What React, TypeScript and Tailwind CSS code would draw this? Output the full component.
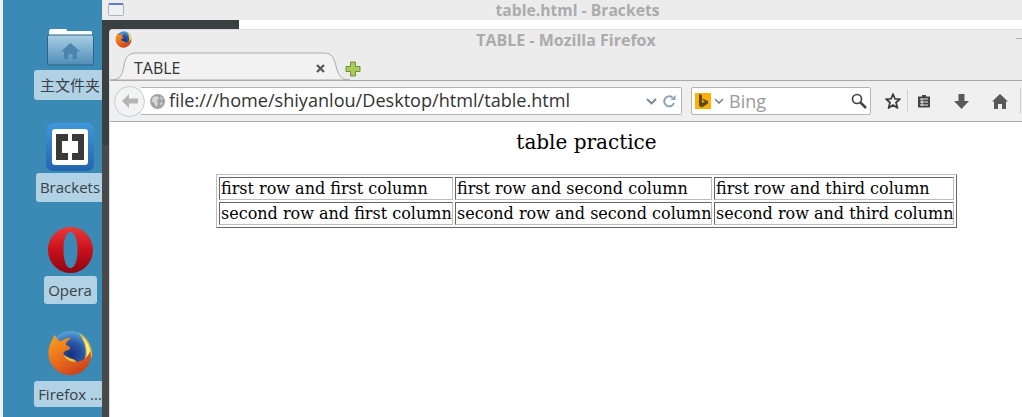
import React from 'react';

const sans = "font-['Open_Sans','Noto_Sans_CJK_SC',sans-serif]";

const FirefoxIcon: React.FC<{size: number; id: string}> = ({size, id}) => (
    <svg width={size} height={size} viewBox="0 0 48 48">
        <defs>
            <radialGradient id={`${id}-globe`} cx="50%" cy="60%" r="60%">
                <stop offset="0%" stopColor="#16307f" />
                <stop offset="55%" stopColor="#2a5aa8" />
                <stop offset="100%" stopColor="#5aa6dc" />
            </radialGradient>
            <linearGradient id={`${id}-fox`} x1="0.1" y1="0" x2="0.7" y2="1">
                <stop offset="0%" stopColor="#f7a01d" />
                <stop offset="55%" stopColor="#ea6a1c" />
                <stop offset="100%" stopColor="#c8401a" />
            </linearGradient>
        </defs>
        <circle cx="25" cy="22" r="21" fill={`url(#${id}-globe)`} />
        <path d="M33 3C42 8 48 18 47 28L37 36C43 26 41 13 33 3Z" fill="#f8c020" />
        <path d="M37 7C43 13 46 21 44.500 29L41 31C43 24 42 15 37 7Z" fill="#fff3a8" />
        <path
            d="M8 5C6 10 1 16 1.500 25C2 37 12 47 24 47C36 47 45 38 46 27C46 25 45.500 24 45 22C43 28 38 33 31 33C24 34 18 30 17 25C17 23 19 21 22 21C25 20 25 17 20 16C19 13 22 11 25 8C20 8 16 10 14 12C12 11 10 9 8 5Z"
            fill={`url(#${id}-fox)`}
        />
        <path d="M17 25C18 30 24 34 31 33C28 30 24 30 21 28C19 27 18 26 17 25Z" fill="#fbc02d" />
    </svg>
);

const FolderIcon: React.FC = () => (
    <svg width="47" height="38" viewBox="0 0 47 38">
        <defs>
            <linearGradient id="folder" x1="0" y1="0" x2="0" y2="1">
                <stop offset="0%" stopColor="#a9cfe4" />
                <stop offset="100%" stopColor="#4f8db8" />
            </linearGradient>
        </defs>
        <path d="M2 3.500Q2 1 4 1H19Q20 1 20 3H44Q45 3 45 5V9H2Z" fill="#fff" />
        <rect x="0.500" y="7" width="46" height="30" rx="1.500" fill="url(#folder)" stroke="#2e6287" />
        <path d="M23.500 15L33 23.500H30V31H25.500V26H21.500V31H17V23.500H14Z" fill="#4d84ad" />
    </svg>
);

const BracketsIcon: React.FC = () => (
    <svg width="48" height="48" viewBox="0 0 48 48">
        <defs>
            <linearGradient id="brk" x1="0" y1="0" x2="0" y2="1">
                <stop offset="0%" stopColor="#3f97dc" />
                <stop offset="100%" stopColor="#2264ae" />
            </linearGradient>
        </defs>
        <rect width="48" height="48" rx="7" fill="url(#brk)" />
        <rect x="6" y="6" width="36" height="36" rx="3" fill="#fff" />
        <path d="M10 11H22V18H16V30H22V37H10Z" fill="#3a3a3a" />
        <path d="M26 11H38V37H26V30H32V18H26Z" fill="#3a3a3a" />
    </svg>
);

const OperaIcon: React.FC = () => (
    <svg width="45" height="46" viewBox="0 0 45 46">
        <defs>
            <linearGradient id="opera" x1="0" y1="0" x2="0" y2="1">
                <stop offset="0%" stopColor="#e83a3a" />
                <stop offset="50%" stopColor="#c8101a" />
                <stop offset="100%" stopColor="#8e0610" />
            </linearGradient>
        </defs>
        <path
            fillRule="evenodd"
            d="M22.500 0C35 0 45 10 45 23C45 36 35 46 22.500 46C10 46 0 36 0 23C0 10 10 0 22.500 0ZM22.500 5C18 5 15.500 13 15.500 23C15.500 33 18 41 22.500 41C27 41 29.500 33 29.500 23C29.500 13 27 5 22.500 5Z"
            fill="url(#opera)"
        />
    </svg>
);

const DesktopItem: React.FC<{icon: React.ReactNode; label: string; className: string; boxClass: string}> = ({
    icon,
    label,
    className,
    boxClass,
}) => (
    <div className={`flex flex-col items-center ${className}`}>
        {icon}
        <span
            className={`flex items-center justify-center whitespace-nowrap rounded-[3px] bg-[#b0d2e4] text-[15px] text-[#3a4046] ${sans} ${boxClass}`}
        >
            {label}
        </span>
    </div>
);

const Toolbar: React.FC = () => (
    <div className="flex h-[42px] items-center border-y border-[#a8a8a8] bg-[#f0f0f0]">
        <div className="z-10 ml-[4px] flex size-[31px] shrink-0 items-center justify-center rounded-full border border-[#c3ccd6] bg-[#f3f3f3]">
            <svg width="18" height="16" viewBox="0 0 18 16">
                <path d="M8 1L1 8L8 15V10.500H17V5.500H8Z" fill="#b4b4b4" />
            </svg>
        </div>
        <div className="-ml-[4px] flex h-[28px] w-[541px] items-center rounded-r-[2px] border border-l-0 border-[#b4b4b4] bg-white pl-[9px] pr-[3px]">
            <svg width="15" height="15" viewBox="0 0 15 15" className="shrink-0">
                <circle cx="7.500" cy="7.500" r="7.500" fill="#a2a2a2" />
                <path d="M3 3L7 2L9 4L7 7L8 10L6 13L4 9L1.500 7ZM10 2L13 5L11 6ZM10 9L13 8L11 12Z" fill="#d6d6d6" />
            </svg>
            <span className={`ml-[4px] flex-1 whitespace-nowrap text-[18.1px] text-[#333] ${sans}`}>
                file:///home/shiyanlou/Desktop/html/table.html
            </span>
            <svg width="11" height="7" viewBox="0 0 11 7" className="mr-[6px]">
                <path d="M1 1L5.500 5.500L10 1" fill="none" stroke="#7a8490" strokeWidth="1.800" />
            </svg>
            <svg width="13" height="13" viewBox="0 0 13 13" className="mr-[2px]">
                <path d="M11 8A5 5 0 1 1 9.500 2.500" fill="none" stroke="#8ea2b4" strokeWidth="2" />
                <path d="M7.500 5H12.500V0Z" fill="#8ea2b4" />
            </svg>
        </div>
        <div className="ml-[9px] flex h-[28px] w-[180px] items-center rounded-[2px] border border-[#b4b4b4] bg-white pl-[3px] pr-[3px]">
            <span className="flex size-[16px] items-center justify-center bg-[#ffb300]">
                <svg width="10" height="14" viewBox="0 0 10 14">
                    <path d="M1 0L4 1V9L7 7.500L5 6.500L4.500 4.500L10 7V9.500L4 13.500L1 12Z" fill="#5c4a22" />
                </svg>
            </span>
            <svg width="10" height="6" viewBox="0 0 10 6" className="ml-[3px]">
                <path d="M1 1L5 5L9 1" fill="none" stroke="#7a8490" strokeWidth="1.600" />
            </svg>
            <span className={`ml-[5px] flex-1 text-[18px] text-[#9a9a9a] ${sans}`}>Bing</span>
            <svg width="16" height="16" viewBox="0 0 16 16">
                <circle cx="6" cy="6" r="4.500" fill="none" stroke="#444" strokeWidth="1.700" />
                <path d="M9.500 9.500L15 15" stroke="#444" strokeWidth="2.500" />
            </svg>
        </div>
        <svg width="16" height="16" viewBox="0 0 16 16" className="ml-[14px] shrink-0">
            <path
                d="M8 1L10 6H15L11 9.500L12.500 15L8 12L3.500 15L5 9.500L1 6H6Z"
                fill="none"
                stroke="#3d3d3d"
                strokeWidth="1.700"
                strokeLinejoin="round"
            />
        </svg>
        <span className="ml-[6px] h-[22px] w-px shrink-0 bg-[#cfcfcf]" />
        <svg width="14" height="14" viewBox="0 0 14 14" className="ml-[9px] shrink-0">
            <path d="M5 1H9V2.500H13V13.500H1V2.500H5Z" fill="#444" />
            <path d="M3 5H11M3 8H11M3 11H11M5 5V12" stroke="#eee" strokeWidth="1" />
        </svg>
        <svg width="15" height="15" viewBox="0 0 15 15" className="ml-[23px] shrink-0">
            <path d="M4.500 0H10.500V7H15L7.500 15L0 7H4.500Z" fill="#595959" />
        </svg>
        <svg width="16" height="15" viewBox="0 0 16 15" className="ml-[23px] shrink-0">
            <path d="M8 0L16 7.500H14V15H10V10H6V15H2V7.500H0Z" fill="#595959" />
        </svg>
        <span className="ml-[12px] h-[26px] w-px shrink-0 bg-[#cfcfcf]" />
    </div>
);

const cellClass =
    'border border-b-[#bdbdbd] border-l-[#666] border-r-[#bdbdbd] border-t-[#666] p-px text-left font-normal whitespace-nowrap leading-[19px]';

const rows = [
    ['first row and first column', 'first row and second column', 'first row and third column'],
    ['second row and first column', 'second row and second column', 'second row and third column'],
];

const App: React.FC = () => {
    return (
        <div className="flex h-[417px] w-[1022px] overflow-hidden bg-white">
            <div className="w-[3px] shrink-0 bg-[#eef0f3]" />
            <div className="w-[99px] shrink-0 overflow-hidden bg-[#3a8ab5]">
                <div className="flex w-[134px] flex-col">
                    <DesktopItem
                        icon={<FolderIcon />}
                        label="主文件夹"
                        className="mt-[28px]"
                        boxClass="mt-[4px] h-[30px] w-[72px]"
                    />
                    <DesktopItem
                        icon={<BracketsIcon />}
                        label="Brackets"
                        className="mt-[23px]"
                        boxClass="mt-[2px] h-[29px] w-[68px]"
                    />
                    <DesktopItem
                        icon={<OperaIcon />}
                        label="Opera"
                        className="mt-[25px]"
                        boxClass="mt-[3px] h-[28px] w-[53px]"
                    />
                    <DesktopItem
                        icon={<FirefoxIcon size={46} id="desk" />}
                        label="Firefox ..."
                        className="mt-[26px]"
                        boxClass="mt-[5px] h-[26px] w-[72px]"
                    />
                </div>
            </div>
            <div className="flex min-w-0 flex-1 flex-col">
                <div className="relative flex h-[20px] shrink-0 items-center justify-center border-l border-[#e4e4e4] bg-[#ececec]">
                    <span className="absolute left-[5px] top-[3px] h-[13px] w-[16px] rounded-[2px] border border-t-2 border-[#a9b4c2] border-t-[#5a80c0] bg-[#eef0f3]" />
                    <span className={`pl-[30px] text-[15.7px] leading-[20px] font-bold text-[#ababab] ${sans}`}>
                        table.html - Brackets
                    </span>
                </div>
                <div className="flex min-h-0 flex-1 bg-[#47494b]">
                    <div className="w-[7px] shrink-0">
                        <div className="h-[125px] bg-[#3a3f42]" />
                    </div>
                    <div className="flex min-w-0 flex-1 flex-col">
                        <div className="-ml-[7px] flex h-[9px] shrink-0 bg-white">
                            <div className="w-[137px] bg-[#3a3f42]" />
                        </div>
                        <div className="flex min-h-0 flex-1 flex-col overflow-hidden rounded-tl-[4px] border-l border-t border-[#dcdcdc] bg-white">
                            <div className="relative h-[22px] shrink-0 bg-[#ececec]">
                                <span className="absolute left-[5px] top-[1px]">
                                    <FirefoxIcon size={17} id="title" />
                                </span>
                                <p className={`text-center text-base leading-[20px] font-bold text-[#ababab] ${sans}`}>
                                    TABLE - Mozilla Firefox
                                </p>
                                <span className="absolute right-0 top-[8px] h-px w-[6px] bg-[#b0b0b0]" />
                            </div>
                            <div className="relative h-[28px] shrink-0 bg-[#ececec]">
                                <svg width="250" height="29" viewBox="0 0 250 29" className="absolute left-0 top-0">
                                    <path
                                        d="M0 28C10 28 12 24 14 14C15 6 18 1 26 1H214C222 1 224 6 226 14C228 24 232 28 240 28Z"
                                        fill="#f2f2f2"
                                        stroke="#ababab"
                                    />
                                </svg>
                                <div className="relative flex items-center pl-[24px] pt-[4px]">
                                    <span className={`w-[182px] text-base text-[#333] ${sans}`}>TABLE</span>
                                    <svg width="9" height="9" viewBox="0 0 9 9">
                                        <path d="M1 1L8 8M8 1L1 8" stroke="#555" strokeWidth="2.200" />
                                    </svg>
                                    <svg width="16" height="16" viewBox="0 0 16 16" className="ml-[20px] mt-px">
                                        <path
                                            d="M5.500 1H10.500V5.500H15V10.500H10.500V15H5.500V10.500H1V5.500H5.500Z"
                                            fill="#a8cc5c"
                                            stroke="#6f9334"
                                        />
                                    </svg>
                                </div>
                            </div>
                            <Toolbar />
                            <div className="flex-1 bg-white">
                                <div className="ml-[106px] w-[741px] font-['DejaVu_Serif',serif] text-black">
                                    <h1 className="mt-[7px] h-[26px] text-center text-[20px] leading-[26px]">
                                        table practice
                                    </h1>
                                    <table className="mt-[19px] w-[741px] table-fixed border-separate border-spacing-[2px] border border-b-[#666] border-l-[#bdbdbd] border-r-[#666] border-t-[#bdbdbd] text-base">
                                        <colgroup>
                                            <col className="w-[234px]" />
                                            <col className="w-[257px]" />
                                            <col className="w-[240px]" />
                                        </colgroup>
                                        <tbody>
                                            {rows.map((row) => (
                                                <tr key={row[0]}>
                                                    {row.map((cell) => (
                                                        <td key={cell} className={cellClass}>
                                                            {cell}
                                                        </td>
                                                    ))}
                                                </tr>
                                            ))}
                                        </tbody>
                                    </table>
                                </div>
                            </div>
                        </div>
                    </div>
                </div>
            </div>
        </div>
    );
};

export default App;
